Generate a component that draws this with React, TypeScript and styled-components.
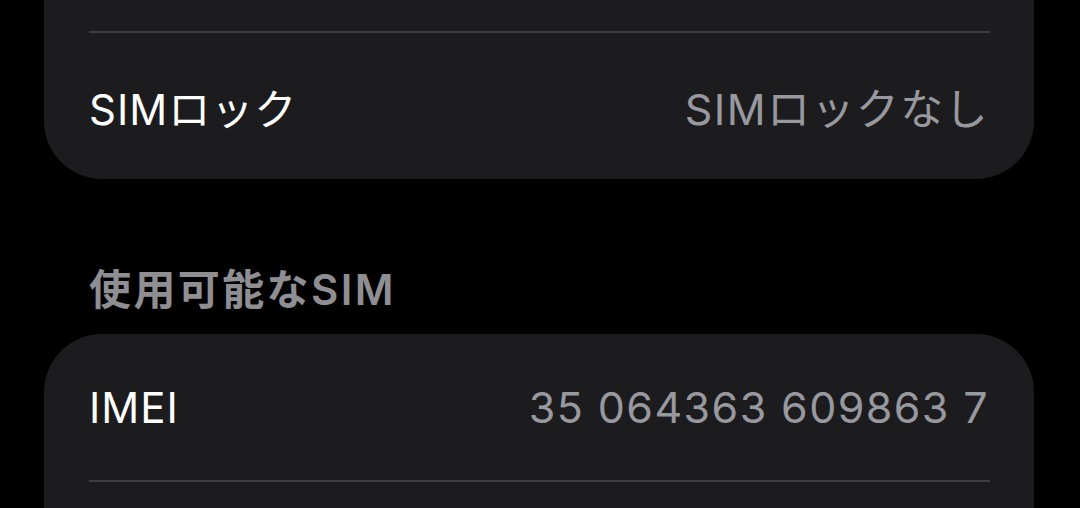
import styled, { createGlobalStyle } from "styled-components";

const GlobalStyle = createGlobalStyle`
    html, body {
        margin: 0;
        padding: 0;
        background: #000;
    }
    body {
        font-family: Inter, "Noto Sans CJK JP", sans-serif;
        -webkit-font-smoothing: antialiased;
    }
`

type RowPropsType = {
    label: string
    value: string
}

const SettingRow = (props: RowPropsType) => {
    return (
        <Row>
            <Label>{props.label}</Label>
            <Value>{props.value}</Value>
        </Row>
    );
};

export default function App() {
    return (
        <>
            <GlobalStyle/>
            <Page>
                <Card $cut="top">
                    <CutOff/>
                    <Separator/>
                    <SettingRow label="SIMロック" value="SIMロックなし"/>
                </Card>

                <SectionHeader>使用可能なSIM</SectionHeader>

                <Card $cut="bottom">
                    <SettingRow label="IMEI" value="35 064363 609863 7"/>
                    <Separator/>
                    <CutOff/>
                </Card>
            </Page>
        </>
    );
}

const Page = styled.div`
    height: 508px;
    overflow: hidden;
    display: flex;
    flex-direction: column;
    padding: 0 46px 0 44px;
`

const Card = styled.div<{ $cut: "top" | "bottom" }>`
    background-color: #1c1c1e;
    border-radius: ${p => p.$cut === "top" ? "0 0 58px 58px" : "58px 58px 0 0"};
    display: flex;
    flex-direction: column;
    padding-left: 45px;
    flex-shrink: 0;
`

const CutOff = styled.div`
    height: 31px;
`

const Separator = styled.div`
    height: 2px;
    margin-right: 44px;
    background-color: #3d3d40;
`

const Row = styled.div`
    height: 146px;
    display: flex;
    align-items: center;
    justify-content: space-between;
    padding-right: 46px;
`

const Label = styled.span`
    font-size: 42px;
    letter-spacing: 1px;
    color: #ffffff;
    font-weight: 400;
`

const Value = styled.span`
    font-size: 43px;
    letter-spacing: 1.4px;
    margin-right: -1px;
    color: #98989f;
    font-weight: 400;
`

const SectionHeader = styled.div`
    font-size: 42px;
    font-weight: 600;
    letter-spacing: 2.4px;
    color: #8e8e93;
    line-height: 50px;
    margin: 86px 0 19px 45px;
`
